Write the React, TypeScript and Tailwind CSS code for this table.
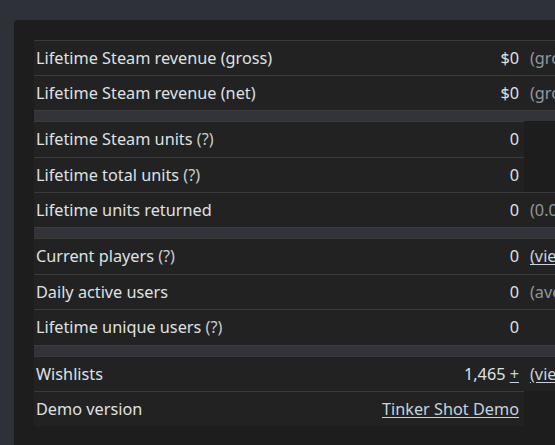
import React from 'react';

type Row =
  | { kind: 'sep' }
  | {
      kind: 'row';
      label: string;
      help?: boolean;
      value: React.ReactNode;
      extra?: React.ReactNode;
      // whether the third cell exists at all (empty cell still gets bg + border)
      third?: boolean;
      tall?: boolean;
    };

const muted = (t: string) => <span className="text-[#8f98a0]">{t}</span>;
const link = (t: string) => <a className="text-[#c6d4df] underline underline-offset-2 cursor-pointer">{t}</a>;

const rows: Row[] = [
  { kind: 'row', label: 'Lifetime Steam revenue (gross)', value: '$0', extra: muted('(gross revenue from Steam sales)'), third: true },
  { kind: 'row', label: 'Lifetime Steam revenue (net)', value: '$0', extra: muted('(gross minus returns, chargebacks, VAT)'), third: true },
  { kind: 'sep' },
  { kind: 'row', label: 'Lifetime Steam units', help: true, value: '0', tall: true },
  { kind: 'row', label: 'Lifetime total units', help: true, value: '0' },
  { kind: 'row', label: 'Lifetime units returned', value: '0', extra: muted('(0.00% of Steam units)'), third: true },
  { kind: 'sep' },
  { kind: 'row', label: 'Current players', help: true, value: '0', extra: link('(view player data)'), third: true, tall: true },
  { kind: 'row', label: 'Daily active users', value: '0', extra: muted('(average over the last week)'), third: true },
  { kind: 'row', label: 'Lifetime unique users', help: true, value: '0', third: true, tall: true },
  { kind: 'sep' },
  {
    kind: 'row',
    label: 'Wishlists',
    value: (
      <>
        1,465 {link('+')}
      </>
    ),
    extra: link('(view wishlist stats)'),
    third: true,
  },
  { kind: 'row', label: 'Demo version', value: link('Tinker Shot Demo') },
];

export default function App() {
  return (
    <div
      className="h-screen w-full overflow-hidden bg-[#2e3138] pt-[20px] pl-[14px] flex flex-col"
      style={{ fontFamily: '"Noto Sans", "Open Sans", sans-serif' }}
    >
      <div className="flex-1 bg-[#1d1d1d] rounded-tl-[4px] pt-[20px] pl-[20px]">
        <div className="flex flex-col w-[700px] text-[16.25px] text-[#dfe1e2]">
          {rows.map((r, i) =>
            r.kind === 'sep' ? (
              <div key={i} className="h-[11px] border-t border-[#3d3d3d] bg-[#33343a]" />
            ) : (
              <div key={i} className={r.tall ? 'flex h-[36px]' : 'flex h-[35px]'}>
                <div className="w-[490px] shrink-0 flex items-center justify-between border-t border-[#3a3a3a] bg-[#222222] pl-[2px] pr-[5px]">
                  <span>
                    {r.label}
                    {r.help && <span className="text-[#c9ccce]"> (?)</span>}
                  </span>
                  <span>{r.value}</span>
                </div>
                {r.third && (
                  <div className="flex-1 flex items-center border-t border-[#3a3a3a] bg-[#222222] pl-[6px] whitespace-nowrap">
                    {r.extra}
                  </div>
                )}
              </div>
            )
          )}
        </div>
      </div>
    </div>
  );
}
